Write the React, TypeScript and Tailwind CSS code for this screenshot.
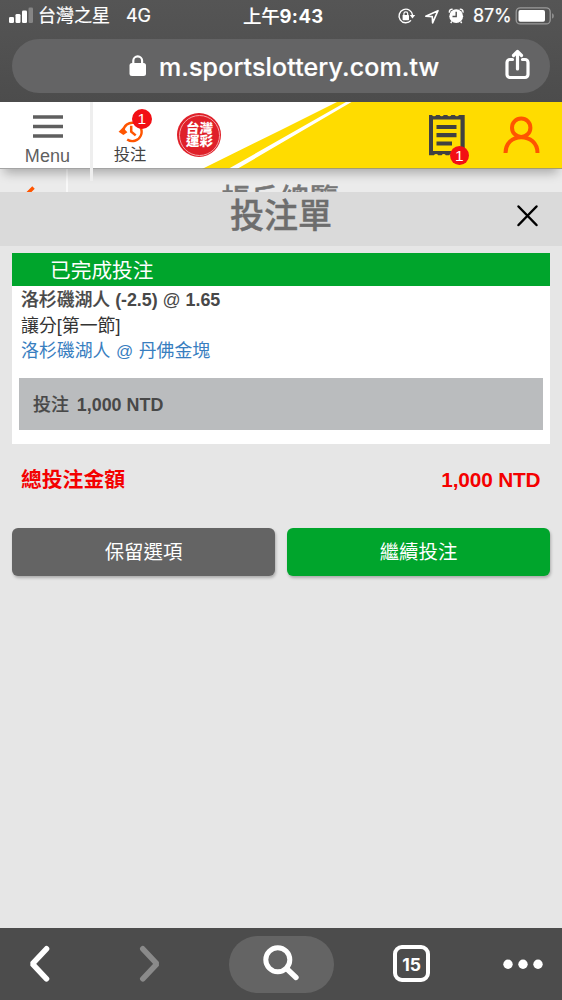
import type { ReactNode } from "react";

const sf = "font-[Inter,'Noto_Sans_CJK_TC',sans-serif]";
const arial = "font-['Liberation_Sans','Noto_Sans_CJK_TC',sans-serif]";

function Signal() {
  return (
    <svg className="shrink-0" width="25" height="17" viewBox="9 7 25 17" fill="#fff">
      <rect x="9" y="17" width="5" height="6" rx="1.3" />
      <rect x="15.5" y="14" width="5" height="9" rx="1.3" />
      <rect x="22" y="10.5" width="5" height="12.5" rx="1.3" />
      <rect x="28.5" y="7.5" width="4.5" height="15.5" rx="1.3" fill="#858585" />
    </svg>
  );
}

function StatusIcons() {
  return (
    <svg className="shrink-0" width="68" height="18" viewBox="397 6 68 18" fill="none" stroke="#fff">
      <path d="M411 19.400a6.800 6.800 0 1 1 1.600-5" strokeWidth="1.400" />
      <path d="M409.800 14h5.400l-2.700 3.600z" fill="#fff" stroke="none" />
      <rect x="402.600" y="14" width="6.400" height="5.200" rx=".6" fill="#fff" stroke="none" />
      <path d="M403.900 14.400v-1.600a1.900 1.900 0 0 1 3.800 0v1.600" strokeWidth="1.200" />
      <path d="M425.800 15.300 438 9.700l-5.400 12.100-.3-6.200z" strokeWidth="1.600" strokeLinejoin="round" />
      <circle cx="456.200" cy="15.200" r="6.900" fill="#fff" stroke="none" />
      <path d="M449.300 11.200a3 3 0 0 1 2.900-3M463.100 11.200a3 3 0 0 0-2.900-3" strokeWidth="1.300" strokeLinecap="round" />
      <path d="m451.800 20.500-1.100 1.500M460.600 20.500l1.100 1.500" strokeWidth="1.400" />
      <path d="M456.200 10.800v4.700h-3.700" stroke="#505050" strokeWidth="1.400" />
    </svg>
  );
}

function Battery() {
  return (
    <svg className="shrink-0" width="41" height="18" viewBox="515 6 41 18">
      <rect x="516.200" y="6.900" width="34" height="16" rx="4" fill="none" stroke="#9a9a9a" strokeWidth="1.300" />
      <rect x="518.500" y="9.100" width="26.500" height="11.600" rx="1.800" fill="#fff" />
      <path d="M552.200 12.200c2 .6 2 4.800 0 5.400z" fill="#9a9a9a" />
    </svg>
  );
}

function Badge({ className, children }: { className: string; children: ReactNode }) {
  return (
    <span className={`absolute flex size-[19.5px] items-center justify-center rounded-full bg-[#f20f14] text-[15.5px] leading-none text-white ${className}`}>
      {children}
    </span>
  );
}

function Receipt() {
  return (
    <svg width="38" height="44" viewBox="428 114 38 44">
      <path
        d="M429 115h3a2.300 2.300 0 0 0 4.200 0h3.400a2.300 2.300 0 0 0 4.200 0h3.400a2.300 2.300 0 0 0 4.200 0h3.400a2.300 2.300 0 0 0 4.200 0H464.700v40.300h-3.700a2.300 2.300 0 0 0-4.200 0h-3.400a2.300 2.300 0 0 0-4.200 0h-3.400a2.300 2.300 0 0 0-4.200 0h-3.400a2.300 2.300 0 0 0-4.200 0H429z"
        fill="#414141"
      />
      <path d="M433 119.500h27.500v31.500H433z" fill="#ffdc00" />
      <path d="M436.500 127h20M436.500 135.200h20M436.500 143.500h15.500" stroke="#414141" strokeWidth="4.200" />
    </svg>
  );
}

function Header() {
  return (
    <header className={`relative z-10 flex h-[67px] shrink-0 bg-white shadow-[0_8px_10px_-4px_rgba(0,0,0,0.28)] ${arial}`}>
      <svg className="absolute left-[200px] top-0" width="362" height="67" viewBox="200 102 362 67">
        <path d="M202 169 281 130 337 102H346L229 168.500zM237 169 351.500 102H562V169z" fill="#ffdc00" />
      </svg>
      <div className="absolute inset-x-0 bottom-0 h-[1.5px] bg-[#8d8d8d]/80" />
      <button className="flex w-[90px] flex-col items-center pl-[5px] pt-[13px] text-[#5f5f5f]">
        <svg width="30" height="24" viewBox="0 0 30 24" stroke="#5f5f5f" strokeWidth="3.600">
          <path d="M0 2h30M0 11.500h30M0 21h30" />
        </svg>
        <span className="mt-[5px] text-[18px] leading-[24px] tracking-[0.1px]">Menu</span>
      </button>
      <div className="relative z-10 h-[79px] w-[3px] shrink-0 bg-[#eeeeee]" />
      <button className="relative flex w-[76px] flex-col items-center pt-[14px]">
        <svg className="ml-[1px]" width="27" height="27" viewBox="118 116 27 27" fill="none" stroke="#ff5500">
          <path d="M123.200 131.500a9.200 9.200 0 1 1 4 8" strokeWidth="2.400" />
          <path d="m118.600 131.800 4.300-4.300 4.500 4.800-4 2.800z" fill="#ff5500" stroke="none" />
          <path d="M131.200 125.800v5.800l4.500 3.800" strokeWidth="2.500" />
        </svg>
        <span className="-mt-px mr-[2px] text-[16.3px] leading-[24px] text-[#444]">投注</span>
        <Badge className="left-[39px] top-[7px]">1</Badge>
      </button>
      <div className="relative ml-[8px] mt-[11px] flex size-[44px] flex-col items-center justify-center rounded-full bg-[#df2029] text-[13.5px] font-black leading-[13.5px] text-white">
        <span className="absolute inset-[1.5px] rounded-full border border-[#f6a4a7]" />
        <span className="-skew-x-3">台灣</span>
        <span className="-skew-x-3">運彩</span>
      </div>
      <button className="relative ml-[207px] mt-[12px] h-[44px] w-[38px]">
        <Receipt />
        <Badge className="left-[21.5px] top-[31.5px]">1</Badge>
      </button>
      <button className="relative ml-[36px] mt-[13px] h-[40px] w-[38px]">
        <svg width="38" height="40" viewBox="502 115 38 40" fill="none" stroke="#ff5500" strokeWidth="4">
          <circle cx="521.200" cy="127.700" r="9.200" />
          <path d="M505.500 153c0-10 7-15.800 15.700-15.800S537.500 143 537.500 153" />
        </svg>
      </button>
    </header>
  );
}

function ActionButton({ className, children }: { className: string; children: ReactNode }) {
  return (
    <button className={`flex h-[48px] flex-1 items-center justify-center rounded-[6px] pt-px text-[19.4px] text-white shadow-[1px_2px_3px_rgba(0,0,0,0.25)] ${className}`}>
      {children}
    </button>
  );
}

export default function App() {
  return (
    <div className={`flex h-[1000px] w-[562px] flex-col overflow-hidden bg-[#e6e6e6] ${arial}`}>
      <div className={`h-[102px] shrink-0 bg-linear-to-b from-[#555] to-[#4c4c4c] text-white ${sf}`}>
        <div className="flex h-[39px] items-center whitespace-nowrap pb-[8px] pl-[9px] text-[18px] leading-none">
          <Signal />
          <span className="ml-[4px] w-[88px] pt-px [-webkit-text-stroke:0.2px_white]">台灣之星</span>
          <span className="w-[117px] pt-px tracking-[-0.2px] [-webkit-text-stroke:0.2px_white]">4G</span>
          <span className="w-[154px] pt-px text-[18.5px] font-bold tracking-[0.4px]"><span className="font-medium tracking-[-0.3px] [-webkit-text-stroke:0.1px_white]">上午</span>9:43</span>
          <StatusIcons />
          <span className="ml-[8px] w-[42px] pt-px tracking-[-0.1px] [-webkit-text-stroke:0.2px_white]">87%</span>
          <Battery />
        </div>
        <div className="mx-[12px] flex h-[54px] items-center rounded-full bg-[#646465] pl-[117px]">
          <svg className="shrink-0" width="18" height="22" viewBox="0 0 18 22">
            <rect x=".5" y="8" width="16.500" height="13" rx="2.500" fill="#fff" />
            <path d="M4.300 9V5.800a4.400 4.400 0 0 1 8.800 0V9" fill="none" stroke="#fff" strokeWidth="2.200" />
          </svg>
          <span className="ml-[12px] w-[346px] whitespace-nowrap pt-[2px] text-[25px] font-medium leading-none tracking-[0.12px] [-webkit-text-stroke:0.2px_white]">m.sportslottery.com.tw</span>
          <svg className="mb-[3px] shrink-0" width="25" height="32" viewBox="0 0 25 32" fill="none" stroke="#fff" strokeWidth="3.200" strokeLinecap="round" strokeLinejoin="round">
            <path d="M7.500 10.500H5A3 3 0 0 0 2 13.500v12A3 3 0 0 0 5 28.500h15a3 3 0 0 0 3-3v-12a3 3 0 0 0-3-3h-2.500M12.500 20V3M8.500 6.500l4-4 4 4" />
          </svg>
        </div>
      </div>

      <Header />

      <div className="flex h-[23px] shrink-0 overflow-hidden bg-[#ebebeb]">
        <div className="w-[66px] shrink-0 pl-[23px] pt-[17px]">
          <svg width="12" height="20" viewBox="0 0 12 20" fill="none" stroke="#ff5500" strokeWidth="3.500">
            <path d="M10.500 1.500 2 10l8.500 8.500" />
          </svg>
        </div>
        <div className="w-[2px] shrink-0 bg-[#f8f8f8]" />
        <div className="whitespace-nowrap pl-[153px] pt-[15px] text-[29.5px] font-medium leading-[32px] text-[#777] [-webkit-text-stroke:0.4px_#777]">帳戶總覽</div>
      </div>

      <div className="flex h-[54px] shrink-0 items-center bg-[#dadada] pl-[230px]">
        <h1 className="w-[286px] whitespace-nowrap pb-[6px] text-[34px] font-medium leading-none text-[#6d6d6d] [-webkit-text-stroke:0.4px_#6d6d6d]">投注單</h1>
        <svg className="mb-[6px]" width="24" height="24" viewBox="0 0 24 24" stroke="#000" strokeWidth="2.500" strokeLinecap="round">
          <path d="m2.500 2.500 18 18.500M20.500 2.500 2.500 21" />
        </svg>
      </div>

      <main className="flex flex-1 flex-col px-[12px] pt-[7px]">
        <section className="flex h-[191px] flex-col bg-white">
          <h2 className="flex h-[33px] items-center bg-[#00a52c] pl-[38px] pt-[3px] text-[20.7px] leading-none text-white">已完成投注</h2>
          <div className="whitespace-nowrap pl-[9px] pt-[2px] text-[17.9px] leading-[25.5px] text-[#333]">
            <p className="font-bold tracking-[-0.05px] text-[#484848]"><span className="font-medium [-webkit-text-stroke:0.2px_#484848]">洛杉磯湖人</span> (-2.5) <span className="font-normal">@</span> 1.65</p>
            <p>讓分[第一節]</p>
            <p className="text-[#387ebf]">洛杉磯湖人 <span className="mx-[0.5px] text-[17px]">@</span> 丹佛金塊</p>
          </div>
          <div className="mx-[7px] mt-[13px] flex h-[52px] items-center gap-[8px] bg-[#babcbe] pl-[14px] pt-[3px] text-[17.9px] font-bold text-[#484848]">
            <span className="font-medium [-webkit-text-stroke:0.2px_#484848]">投注</span>
            <span>1,000 NTD</span>
          </div>
        </section>
        <div className="flex h-[84px] items-center justify-between pb-[12px] pl-[9px] pr-[9.5px] text-[20.8px] font-bold text-[#f40000]">
          <span>總投注金額</span>
          <span className="tracking-[-0.15px]">1,000 NTD</span>
        </div>
        <div className="flex gap-[12px]">
          <ActionButton className="bg-[#646464]">保留選項</ActionButton>
          <ActionButton className="bg-[#00a52c]">繼續投注</ActionButton>
        </div>
      </main>

      <nav className={`flex h-[72px] shrink-0 items-center bg-[#4c4c4c] pl-[28px] text-white ${sf}`}>
        <svg className="shrink-0" width="24" height="38" viewBox="28 945 24 38" fill="none" stroke="#fff" strokeWidth="5.600" strokeLinecap="round">
          <path d="M46.500 948.800 32.400 963.800l14.100 15" strokeLinejoin="bevel" />
        </svg>
        <svg className="ml-[86px] shrink-0" width="24" height="38" viewBox="138 945 24 38" fill="none" stroke="#8a8a8a" strokeWidth="5.600" strokeLinecap="round">
          <path d="m142.800 948.800 14.100 15-14.100 15" strokeLinejoin="bevel" />
        </svg>
        <button className="ml-[67px] flex h-[57px] w-[105px] shrink-0 items-center justify-center rounded-full bg-[#646464]">
          <svg width="38" height="38" viewBox="263 945 38 38" fill="none" stroke="#fff" strokeLinecap="round">
            <circle cx="277.800" cy="959.700" r="12" strokeWidth="5" />
            <path d="m286.500 968.500 9.500 9" strokeWidth="5.400" />
          </svg>
        </button>
        <button className="mb-px ml-[59px] flex size-[37px] shrink-0 items-center justify-center rounded-[9px] border-[4.5px] border-white pt-[2px] text-[17.5px] font-bold leading-none">15</button>
        <svg className="ml-[73px] shrink-0" width="40" height="12" viewBox="0 0 40 12" fill="#fff">
          <circle cx="5" cy="6.200" r="4.700" />
          <circle cx="20" cy="6.200" r="4.700" />
          <circle cx="35" cy="6.200" r="4.700" />
        </svg>
      </nav>
    </div>
  );
}
